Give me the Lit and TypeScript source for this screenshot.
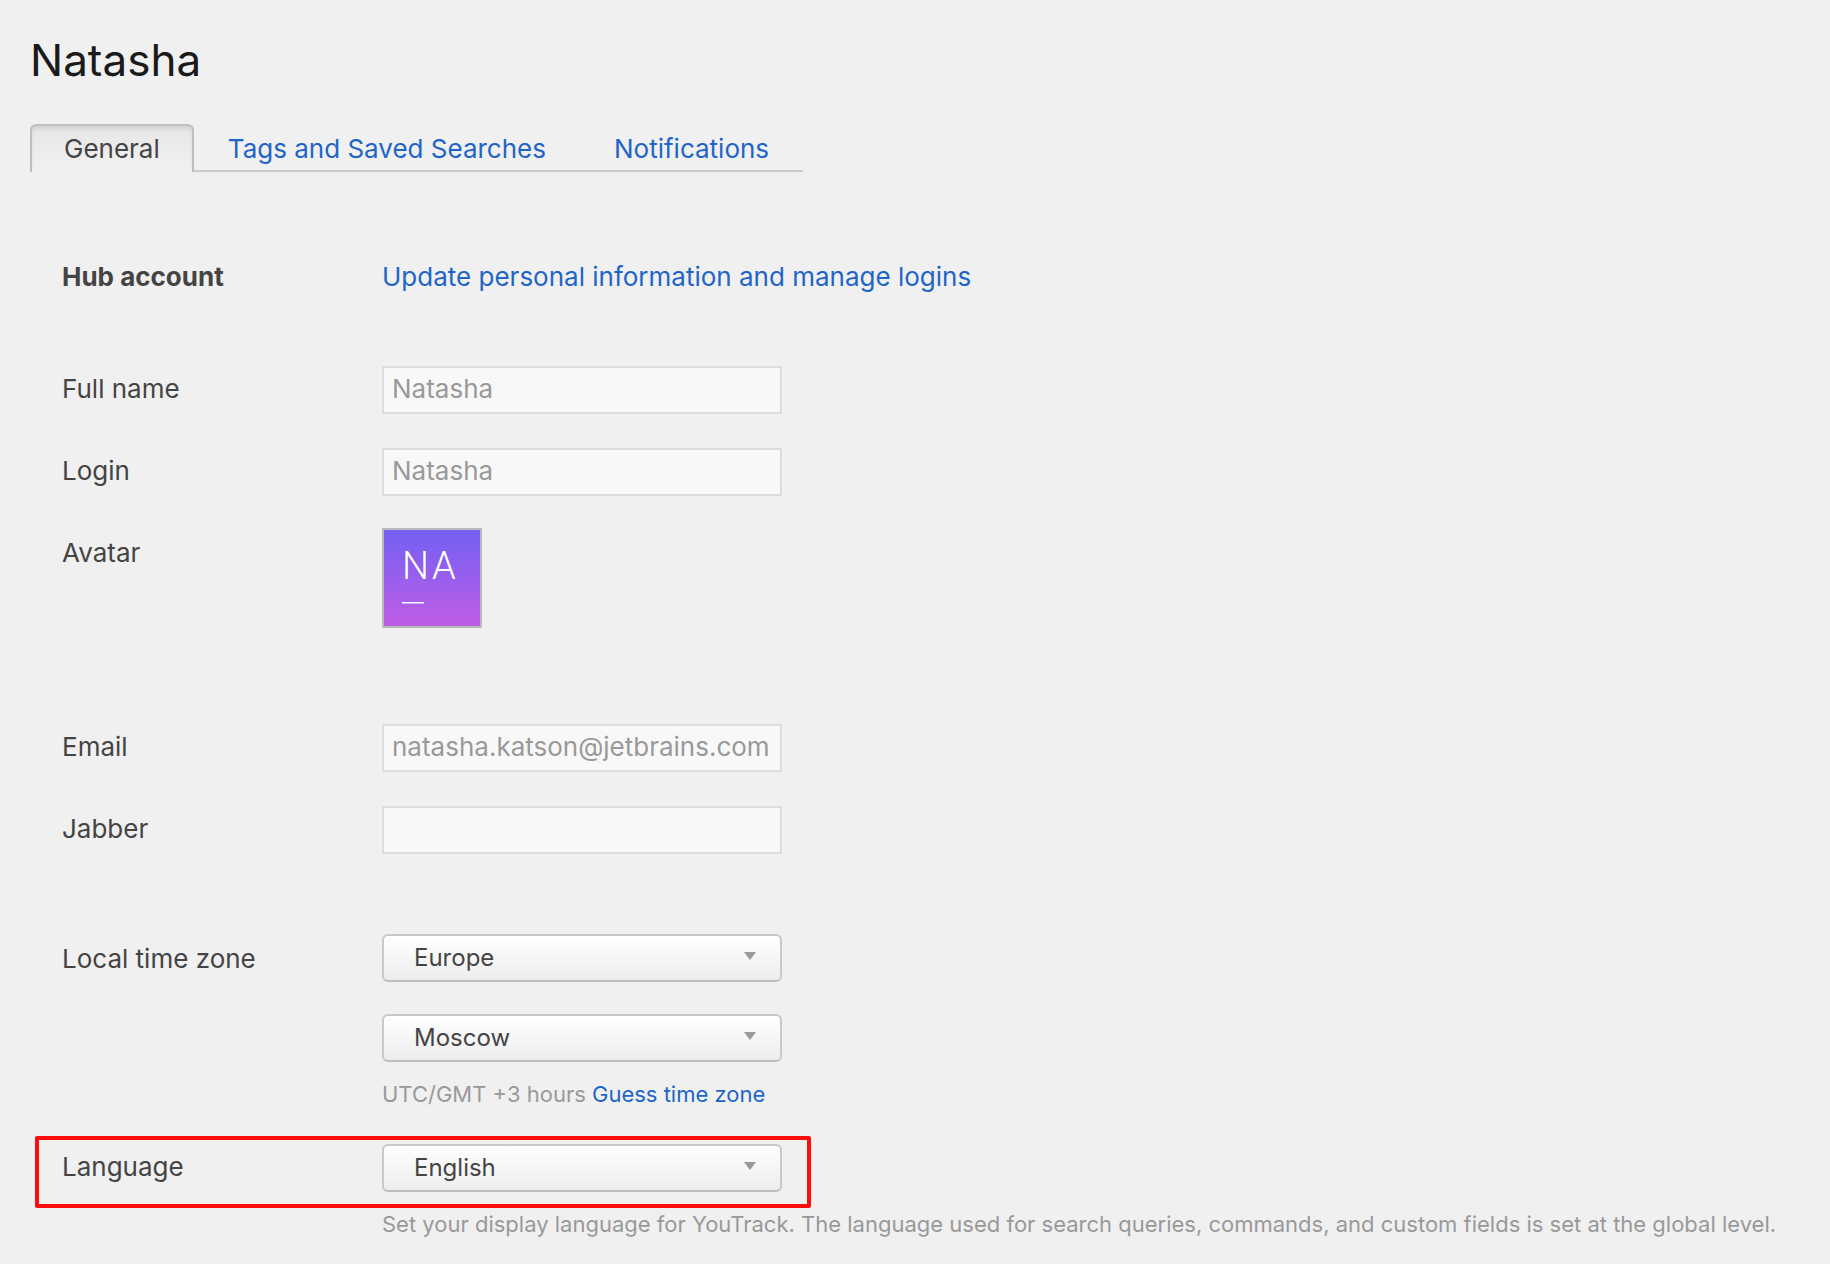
import { LitElement, html, css, TemplateResult } from "lit";
import { customElement, state } from "lit/decorators.js";
import { ifDefined } from "lit/directives/if-defined.js";

@customElement("app-root")
class AppRoot extends LitElement {
  @state() private activeTab = "General";

  private tabs = ["General", "Tags and Saved Searches", "Notifications"];

  static styles = css`
    :host {
      display: block;
      box-sizing: border-box;
      min-height: 100vh;
      padding: 30px 30px 20px;
      background: #f0f0f0;
      color: #444444;
      font: 26px/32px Inter, "Liberation Sans", sans-serif;
    }
    .title {
      margin: 0 0 34px;
      color: #1a1a1a;
      font-size: 44px;
      font-weight: 400;
      line-height: 60px;
    }
    .tabs {
      display: flex;
      width: fit-content;
      margin-bottom: 89px;
    }
    .tab {
      padding: 9px 34px 5px;
      border-bottom: 2px solid #cbcbcb;
      color: #1f65c8;
      text-decoration: none;
    }
    .tab.active {
      padding: 7px 32px;
      border: 2px solid #bebebe;
      border-width: 2px 2px 0;
      border-radius: 6px 6px 0 0;
      background: linear-gradient(#e6e6e6, #f0f0f0 40px);
      box-shadow: inset 0 4px 6px -3px rgba(0, 0, 0, 0.14);
      color: #444444;
    }
    .form {
      display: flex;
      flex-direction: column;
      gap: 34px;
      padding-left: 32px;
    }
    .group {
      display: flex;
      flex-direction: column;
      gap: 34px;
    }
    .row {
      position: relative;
      display: grid;
      grid-template-columns: 320px minmax(0, 1fr);
      align-items: start;
    }
    .label {
      padding-top: 7px;
    }
    .tall {
      margin-top: -2px;
    }
    .tall .label {
      padding-top: 9px;
    }
    .heading {
      margin: 0;
      font-size: 26px;
      font-weight: 700;
      line-height: 32px;
    }
    .hub {
      margin-bottom: 39px;
    }
    .contacts {
      margin-top: 62px;
      margin-bottom: 48px;
    }
    .link {
      color: #1f65c8;
      text-decoration: none;
    }
    .input {
      display: block;
      box-sizing: border-box;
      width: 400px;
      max-width: 100%;
      height: 48px;
      margin: 0;
      padding: 0 8px 4px;
      border: 2px solid #dddddd;
      border-radius: 0;
      background: #f8f8f8;
      color: #999999;
      font: inherit;
    }
    .avatar {
      display: block;
      box-sizing: border-box;
      width: 100px;
      height: 100px;
      border: 2px solid #b9b9b9;
    }
    .initials {
      fill: #ffffff;
      font: 300 38px Roboto, sans-serif;
    }
    .choice {
      position: relative;
      width: 400px;
      max-width: 100%;
    }
    .choice + .choice {
      margin-top: 32px;
    }
    .select {
      appearance: none;
      display: block;
      box-sizing: border-box;
      width: 100%;
      height: 48px;
      margin: 0;
      padding: 0 56px 0 30px;
      border: 2px solid #c8c8c8;
      border-bottom-color: #bebebe;
      border-radius: 6px;
      background: linear-gradient(#ffffff, #ededed);
      color: #444444;
      font: inherit;
      font-size: 24px;
    }
    .arrow {
      position: absolute;
      top: 18px;
      right: 26px;
      width: 12px;
      height: 8px;
      fill: #999999;
      pointer-events: none;
    }
    .note {
      margin: 17px 0 0;
      padding-bottom: 1px;
      color: #999999;
      font-size: 22px;
      line-height: 30px;
    }
    .highlight {
      position: absolute;
      top: -8px;
      left: -27px;
      box-sizing: border-box;
      width: 776px;
      height: 72px;
      border: 4px solid #ff0d0d;
      border-radius: 2px;
      pointer-events: none;
    }
  `;

  private field(id: string, label: string, value: string): TemplateResult {
    return html`
      <div class="row">
        <label class="label" for=${id}>${label}</label>
        <input class="input" id=${id} type="text" .value=${value} disabled />
      </div>
    `;
  }

  private choice(id: string, options: string[], ariaLabel?: string): TemplateResult {
    return html`
      <div class="choice">
        <select class="select" id=${id} aria-label=${ifDefined(ariaLabel)}>
          ${options.map((option) => html`<option>${option}</option>`)}
        </select>
        <svg class="arrow" viewBox="0 0 12 8" aria-hidden="true"><path d="M0 0h12L6 8z" /></svg>
      </div>
    `;
  }

  private selectTab(event: Event, tab: string) {
    event.preventDefault();
    this.activeTab = tab;
  }

  render() {
    return html`
      <h1 class="title">Natasha</h1>
      <nav class="tabs">
        ${this.tabs.map(
          (tab) => html`<a
            class="tab ${tab === this.activeTab ? "active" : ""}"
            href="#"
            @click=${(e: Event) => this.selectTab(e, tab)}
            >${tab}</a
          >`
        )}
      </nav>
      <form class="form">
        <div class="row hub">
          <h2 class="heading">Hub account</h2>
          <div><a class="link" href="#">Update personal information and manage logins</a></div>
        </div>
        ${this.field("full-name", "Full name", "Natasha")}
        ${this.field("login", "Login", "Natasha")}
        <div class="row tall">
          <span class="label">Avatar</span>
          <svg class="avatar" viewBox="0 0 96 96" role="img" aria-label="NA">
            <defs>
              <linearGradient id="fade" x1="0" y1="0" x2="0" y2="1">
                <stop offset="0" stop-color="#7360f3" />
                <stop offset="1" stop-color="#bf5de6" />
              </linearGradient>
            </defs>
            <rect width="96" height="96" fill="url(#fade)" />
            <text class="initials" x="18" y="49">N</text>
            <text class="initials" x="48" y="49">A</text>
            <rect x="18" y="72" width="22" height="1.5" fill="#ffffff" />
          </svg>
        </div>
        <div class="group contacts">
          ${this.field("email", "Email", "natasha.katson@jetbrains.com")}
          ${this.field("jabber", "Jabber", "")}
        </div>
        <div class="row tall">
          <label class="label" for="region">Local time zone</label>
          <div>
            ${this.choice("region", ["Europe"])}
            ${this.choice("city", ["Moscow"], "Time zone city")}
            <p class="note">UTC/GMT +3 hours <a class="link" href="#">Guess time zone</a></p>
          </div>
        </div>
        <div class="row">
          <label class="label" for="language">Language</label>
          <div>
            ${this.choice("language", ["English"])}
            <p class="note">
              Set your display language for YouTrack. The language used for search queries, commands, and custom
              fields is set at the global level.
            </p>
          </div>
          <span class="highlight"></span>
        </div>
      </form>
    `;
  }
}
